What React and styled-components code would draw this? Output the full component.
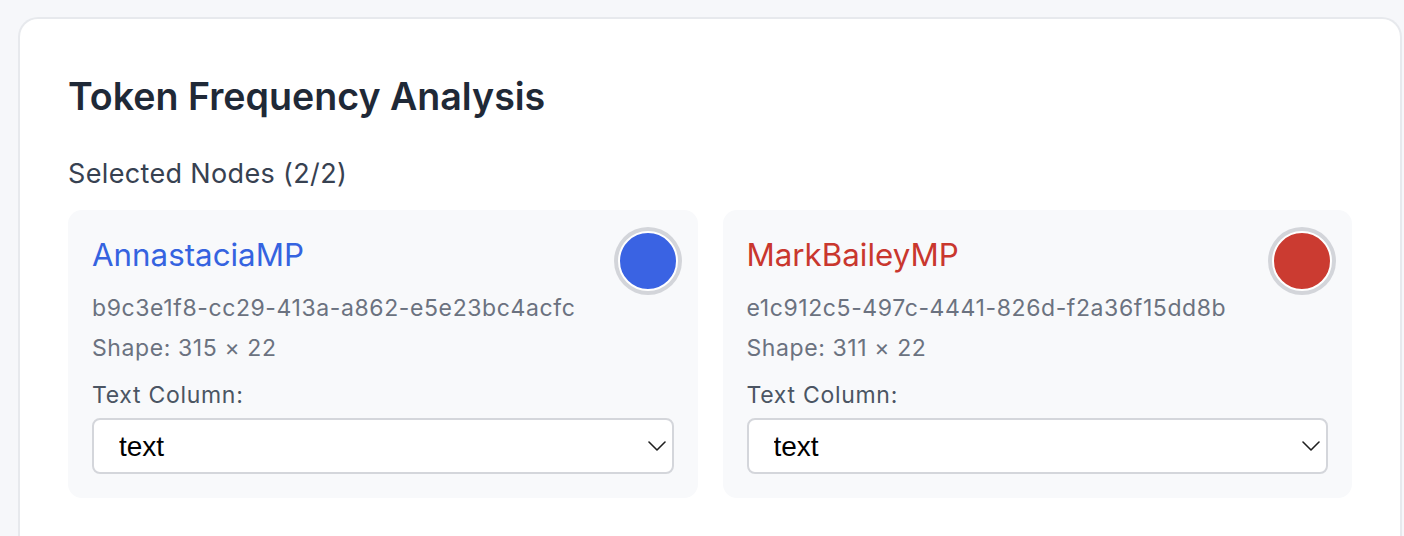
import React from "react"
import styled, { createGlobalStyle } from "styled-components"

const GlobalStyle = createGlobalStyle`
  html, body {
    margin: 0;
    padding: 0;
    background: #f6f7fa;
    font-family: Inter, "Noto Sans", sans-serif;
  }
`

const nodes = [
  {
    name: `AnnastaciaMP`,
    id: `b9c3e1f8-cc29-413a-a862-e5e23bc4acfc`,
    shape: `315 × 22`,
    color: `#3a63e3`,
    text: `#3563e0`,
  },
  {
    name: `MarkBaileyMP`,
    id: `e1c912c5-497c-4441-826d-f2a36f15dd8b`,
    shape: `311 × 22`,
    color: `#cb3b31`,
    text: `#c9372e`,
  },
]

const ChevronDown = () => (
  <svg width="18" height="10" viewBox="0 0 18 10" fill="none">
    <path
      d="M1 1l8 8 8-8"
      stroke="#1f1f1f"
      strokeWidth="1.6"
      strokeLinecap="round"
      strokeLinejoin="round"
    />
  </svg>
)

const NodeCard = ({ node }) => (
  <Node>
    <NodeHeader>
      <NodeName $color={node.text}>{node.name}</NodeName>
      <Swatch $color={node.color} />
    </NodeHeader>
    <Meta>{node.id}</Meta>
    <Meta>Shape: {node.shape}</Meta>
    <Label>Text Column:</Label>
    <SelectWrap>
      <Select defaultValue="text">
        <option value="text">text</option>
      </Select>
      <SelectIcon>
        <ChevronDown />
      </SelectIcon>
    </SelectWrap>
  </Node>
)

const App = () => {
  return (
    <>
      <GlobalStyle />
      <Page>
        <Panel>
          <Title>Token Frequency Analysis</Title>
          <Subtitle>Selected Nodes (2/2)</Subtitle>
          <Grid>
            {nodes.map((node) => (
              <NodeCard key={node.id} node={node} />
            ))}
          </Grid>
        </Panel>
      </Page>
    </>
  )
}

export default App

const Page = styled.div`
  padding: 17px 2px 0 18px;
`

const Panel = styled.section`
  background: #fff;
  border: 2px solid #e7e9ed;
  border-bottom: none;
  border-radius: 20px 20px 0 0;
  padding: 55px 48px 38px;
`

const Title = styled.h1`
  margin: 0;
  font-size: 37.6px;
  line-height: 46px;
  font-weight: 600;
  color: #1f2937;
`

const Subtitle = styled.h2`
  margin: 38px 0 0;
  font-size: 27px;
  line-height: 32px;
  font-weight: 400;
  letter-spacing: 0.35px;
  color: #374151;
`

const Grid = styled.div`
  display: grid;
  grid-template-columns: 1fr 1fr;
  gap: 25px;
  margin-top: 20px;
`

const Node = styled.div`
  background: #f8f9fb;
  border-radius: 14px;
  padding: 24px;
`

const NodeHeader = styled.div`
  display: flex;
  justify-content: space-between;
  align-items: flex-start;
  height: 54px;
`

const NodeName = styled.div`
  margin-top: 1px;
  font-size: 31.3px;
  line-height: 40px;
  color: ${({ $color }) => $color};
`

const Swatch = styled.div`
  flex: none;
  width: 56px;
  height: 56px;
  margin: -3px -4px 0 0;
  border-radius: 50%;
  background: ${({ $color }) => $color};
  border: 2px solid #fff;
  box-shadow: 0 0 0 4px #d3d5da;
`

const Meta = styled.div`
  font-size: 23px;
  line-height: 40px;
  letter-spacing: 0.6px;
  color: #6b7280;
`

const Label = styled.div`
  margin-top: 11px;
  font-size: 23px;
  line-height: 32px;
  letter-spacing: 0.7px;
  color: #4b5563;
`

const SelectWrap = styled.div`
  position: relative;
  margin-top: 7px;
`

const Select = styled.select`
  appearance: none;
  display: block;
  width: 100%;
  height: 56px;
  padding: 0 25px;
  border: 2px solid #d4d6db;
  border-radius: 8px;
  background: #fff;
  font-family: "Liberation Sans", Arial, sans-serif;
  font-size: 28px;
  color: #000;
`

const SelectIcon = styled.span`
  position: absolute;
  right: 8px;
  top: 23px;
  display: flex;
  pointer-events: none;
`
